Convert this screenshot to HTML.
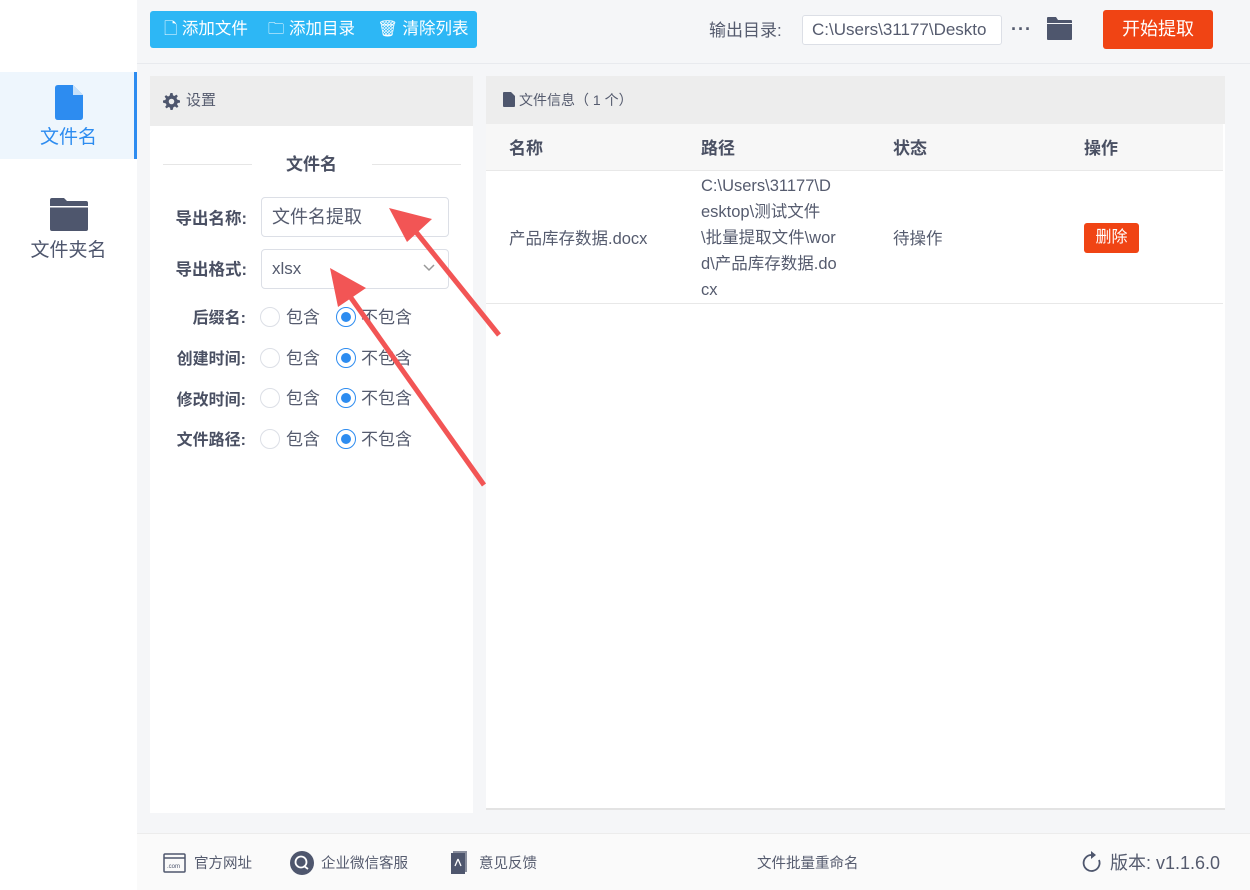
<!DOCTYPE html>
<html><head><meta charset="utf-8"><style>
*{margin:0;padding:0;box-sizing:border-box}
body{width:1250px;height:890px;position:relative;background:#f5f6f8;font-family:"Liberation Sans","Noto Sans CJK SC",sans-serif;color:#555b6e;overflow:hidden}
.abs{position:absolute;line-height:1.35}
.side{left:0;top:0;width:137px;height:890px;background:#fff}
.tb{left:150px;top:11px;width:327px;height:37px;background:#2db7f5;border-radius:3px;color:#fff;font-size:16.5px;line-height:37px}
.lbl{font-size:16px;font-weight:bold;color:#4a5063;text-align:right;width:96px;left:150px}
.radio{width:20px;height:20px;border:1px solid #dcdfe6;border-radius:50%;background:#fff}
.radio.on{border:1.5px solid #2d8cf0}
.radio.on::after{content:"";position:absolute;left:3.5px;top:3.5px;width:10px;height:10px;border-radius:50%;background:#2d8cf0}
.rt{font-size:17px;color:#555b6e}
</style></head><body>
<div class="abs side"></div>
<div class="abs" style="left:0;top:72px;width:137px;height:87px;background:#eef6fd;border-right:3px solid #2d8cf0"></div>
<svg class="abs" style="left:55px;top:85px" width="28" height="35" viewBox="0 0 28 35"><path d="M3 0H18L28 10V32Q28 35 25 35H3Q0 35 0 32V3Q0 0 3 0Z" fill="#2d8cf0"/><path d="M18 0V10H28Z" fill="#eef6fd" opacity=".8"/></svg>
<div class="abs" style="left:0;width:137px;top:125px;text-align:center;font-size:19px;color:#2d8cf0">文件名</div>
<svg class="abs" style="left:50px;top:198px" width="38" height="33" viewBox="0 0 38 33"><path d="M2 0H14L17 3H36Q38 3 38 5V31Q38 33 36 33H2Q0 33 0 31V2Q0 0 2 0Z" fill="#4e566d"/><rect x="0" y="8" width="38" height="1.5" fill="#fff"/></svg>
<div class="abs" style="left:0;width:137px;top:238px;text-align:center;font-size:19px;color:#4e566d">文件夹名</div>

<div class="abs" style="left:137px;top:63px;width:1113px;height:1px;background:#e8eaee"></div>
<div class="abs tb"><span style="margin-left:14px">🗋 添加文件</span><span style="margin-left:20px">🗀 添加目录</span><span style="margin-left:22px">🗑 清除列表</span></div>
<div class="abs" style="left:709px;top:20px;font-size:17px;color:#555b6e">输出目录:</div>
<div class="abs" style="left:802px;top:15px;width:200px;height:30px;background:#fff;border:1px solid #dcdfe6;border-radius:3px;font-size:17px;line-height:28px;padding-left:9px;color:#555b6e;overflow:hidden;white-space:nowrap">C:\Users\31177\Deskto</div>
<div class="abs" style="left:1011px;top:17px;font-size:18px;font-weight:bold;color:#555b6e;letter-spacing:1px">···</div>
<svg class="abs" style="left:1047px;top:17px" width="25" height="23" viewBox="0 0 25 23"><path d="M1 0H9L11 3H24Q25 3 25 4V22Q25 23 24 23H1Q0 23 0 22V1Q0 0 1 0Z" fill="#4e566d"/><rect y="6" width="25" height="1" fill="#f5f6f8"/></svg>
<div class="abs" style="left:1103px;top:10px;width:110px;height:39px;background:#f04414;border-radius:3px;color:#fff;font-size:18px;line-height:39px;text-align:center">开始提取</div>

<div class="abs" style="left:150px;top:76px;width:323px;height:737px;background:#fff"></div>
<div class="abs" style="left:150px;top:76px;width:323px;height:50px;background:#ededed"></div>
<svg class="abs" style="left:163px;top:93px" width="17" height="17" viewBox="0 0 16 16"><path fill="#4e566d" d="M7 0h2l.4 2.2 1.4.6 1.8-1.3 1.4 1.4-1.3 1.8.6 1.4L16 7v2l-2.2.4-.6 1.4 1.3 1.8-1.4 1.4-1.8-1.3-1.4.6L9 16H7l-.4-2.2-1.4-.6-1.8 1.3-1.4-1.4 1.3-1.8-.6-1.4L0 9V7l2.2-.4.6-1.4L1.5 3.4 2.9 2l1.8 1.3 1.4-.6z"/><circle cx="8" cy="8" r="2.6" fill="#ededed"/></svg>
<div class="abs" style="left:186px;top:91px;font-size:15px;color:#555b6e">设置</div>
<div class="abs" style="left:163px;top:164px;width:89px;height:1px;background:#e6e6e6"></div>
<div class="abs" style="left:372px;top:164px;width:89px;height:1px;background:#e6e6e6"></div>
<div class="abs" style="left:286px;top:154px;font-size:17px;font-weight:bold;color:#4a5063">文件名</div>
<div class="abs lbl" style="top:208px;left:150px;width:97px;font-size:16.5px">导出名称:</div>
<div class="abs" style="left:261px;top:197px;width:188px;height:40px;border:1px solid #dcdfe6;border-radius:4px;background:#fff;font-size:18px;line-height:38px;padding-left:10px;color:#555b6e">文件名提取</div>
<div class="abs lbl" style="top:259px;width:97px;font-size:16.5px">导出格式:</div>
<div class="abs" style="left:261px;top:249px;width:188px;height:40px;border:1px solid #dcdfe6;border-radius:4px;background:#fff;font-size:17px;line-height:38px;padding-left:10px;color:#555b6e">xlsx</div>
<svg class="abs" style="left:423px;top:264px" width="12" height="8"><path d="M1 1l5 5 5-5" stroke="#999" stroke-width="1.5" fill="none"/></svg>

<div class="abs lbl" style="top:308px">后缀名:</div>
<div class="abs lbl" style="top:349px">创建时间:</div>
<div class="abs lbl" style="top:390px">修改时间:</div>
<div class="abs lbl" style="top:430px">文件路径:</div>
<div class="abs radio" style="left:260px;top:307px"></div><div class="abs rt" style="left:286px;top:307px">包含</div>
<div class="abs radio on" style="left:336px;top:307px"></div><div class="abs rt" style="left:361px;top:307px">不包含</div>
<div class="abs radio" style="left:260px;top:348px"></div><div class="abs rt" style="left:286px;top:348px">包含</div>
<div class="abs radio on" style="left:336px;top:348px"></div><div class="abs rt" style="left:361px;top:348px">不包含</div>
<div class="abs radio" style="left:260px;top:388px"></div><div class="abs rt" style="left:286px;top:388px">包含</div>
<div class="abs radio on" style="left:336px;top:388px"></div><div class="abs rt" style="left:361px;top:388px">不包含</div>
<div class="abs radio" style="left:260px;top:429px"></div><div class="abs rt" style="left:286px;top:429px">包含</div>
<div class="abs radio on" style="left:336px;top:429px"></div><div class="abs rt" style="left:361px;top:429px">不包含</div>

<div class="abs" style="left:486px;top:76px;width:739px;height:734px;background:#fff;border-bottom:2px solid #e3e3e3"></div>
<div class="abs" style="left:486px;top:76px;width:739px;height:48px;background:#ededed"></div>
<svg class="abs" style="left:503px;top:92px" width="12" height="15" viewBox="0 0 12 15"><path d="M1 0H8L12 4V14Q12 15 11 15H1Q0 15 0 14V1Q0 0 1 0Z" fill="#4e566d"/></svg>
<div class="abs" style="left:519px;top:91px;font-size:14px;color:#555b6e">文件信息（ 1 个）</div>
<div class="abs" style="left:486px;top:124px;width:737px;height:47px;background:#f7f7f7;border-bottom:1px solid #e8e8e8"></div>
<div class="abs" style="left:509px;top:138px;font-size:17px;font-weight:bold;color:#4a5063">名称</div>
<div class="abs" style="left:701px;top:138px;font-size:17px;font-weight:bold;color:#4a5063">路径</div>
<div class="abs" style="left:893px;top:138px;font-size:17px;font-weight:bold;color:#4a5063">状态</div>
<div class="abs" style="left:1084px;top:138px;font-size:17px;font-weight:bold;color:#4a5063">操作</div>
<div class="abs" style="left:509px;top:228px;font-size:16.5px">产品库存数据.docx</div>
<div class="abs" style="left:701px;top:173px;font-size:16.5px;line-height:26px;width:170px">C:\Users\31177\D<br>esktop\测试文件<br>\批量提取文件\wor<br>d\产品库存数据.do<br>cx</div>
<div class="abs" style="left:893px;top:228px;font-size:16.5px">待操作</div>
<div class="abs" style="left:1084px;top:223px;width:55px;height:30px;background:#f04414;border-radius:3px;color:#fff;font-size:16px;line-height:30px;text-align:center">删除</div>
<div class="abs" style="left:486px;top:303px;width:737px;height:1px;background:#e8e8e8"></div>

<div class="abs" style="left:137px;top:833px;width:1113px;height:57px;background:#fafafa;border-top:1px solid #ececec"></div>
<svg class="abs" style="left:163px;top:853px" width="23" height="20" viewBox="0 0 23 20"><rect x="1" y="1" width="21" height="18" rx="1" fill="none" stroke="#4e566d" stroke-width="1.5"/><line x1="1" y1="5" x2="22" y2="5" stroke="#4e566d" stroke-width="1.5"/><text x="4" y="15" font-size="6" fill="#4e566d" font-family="Liberation Sans">.com</text></svg>
<div class="abs" style="left:194px;top:855px;font-size:14.5px">官方网址</div>
<svg class="abs" style="left:290px;top:851px" width="24" height="24"><circle cx="12" cy="12" r="12" fill="#4e566d"/><circle cx="11" cy="11" r="5.5" fill="none" stroke="#fff" stroke-width="1.8"/><path d="M14 15l4 3" stroke="#fff" stroke-width="1.8"/></svg>
<div class="abs" style="left:321px;top:855px;font-size:14.5px">企业微信客服</div>
<svg class="abs" style="left:451px;top:851px" width="16" height="23"><rect x="2" y="0" width="14" height="21" fill="#8a8f9e"/><rect x="0" y="2" width="14" height="21" fill="#4e566d"/><path d="M7 8l-3 7M7 8l3 7" stroke="#fff" stroke-width="1.3"/></svg>
<div class="abs" style="left:479px;top:855px;font-size:14.5px">意见反馈</div>
<div class="abs" style="left:757px;top:855px;font-size:14.5px">文件批量重命名</div>
<svg class="abs" style="left:1082px;top:851px" width="20" height="22"><path d="M10 4A8 8 0 1 0 17 9" fill="none" stroke="#4e566d" stroke-width="1.8"/><path d="M9 0l5 4-5 4z" fill="#4e566d"/></svg>
<div class="abs" style="left:1110px;top:851px;font-size:18px">版本: v1.1.6.0</div>

<svg class="abs" style="left:0;top:0" width="1250" height="890">
<path d="M499 335L412 227" stroke="#f25555" stroke-width="5"/>
<polygon points="389,208 432,219 407,242" fill="#f25555"/>
<path d="M484 485L344 288" stroke="#f25555" stroke-width="5"/>
<polygon points="330,268 366,288 338,307" fill="#f25555"/>
</svg>
</body></html>
